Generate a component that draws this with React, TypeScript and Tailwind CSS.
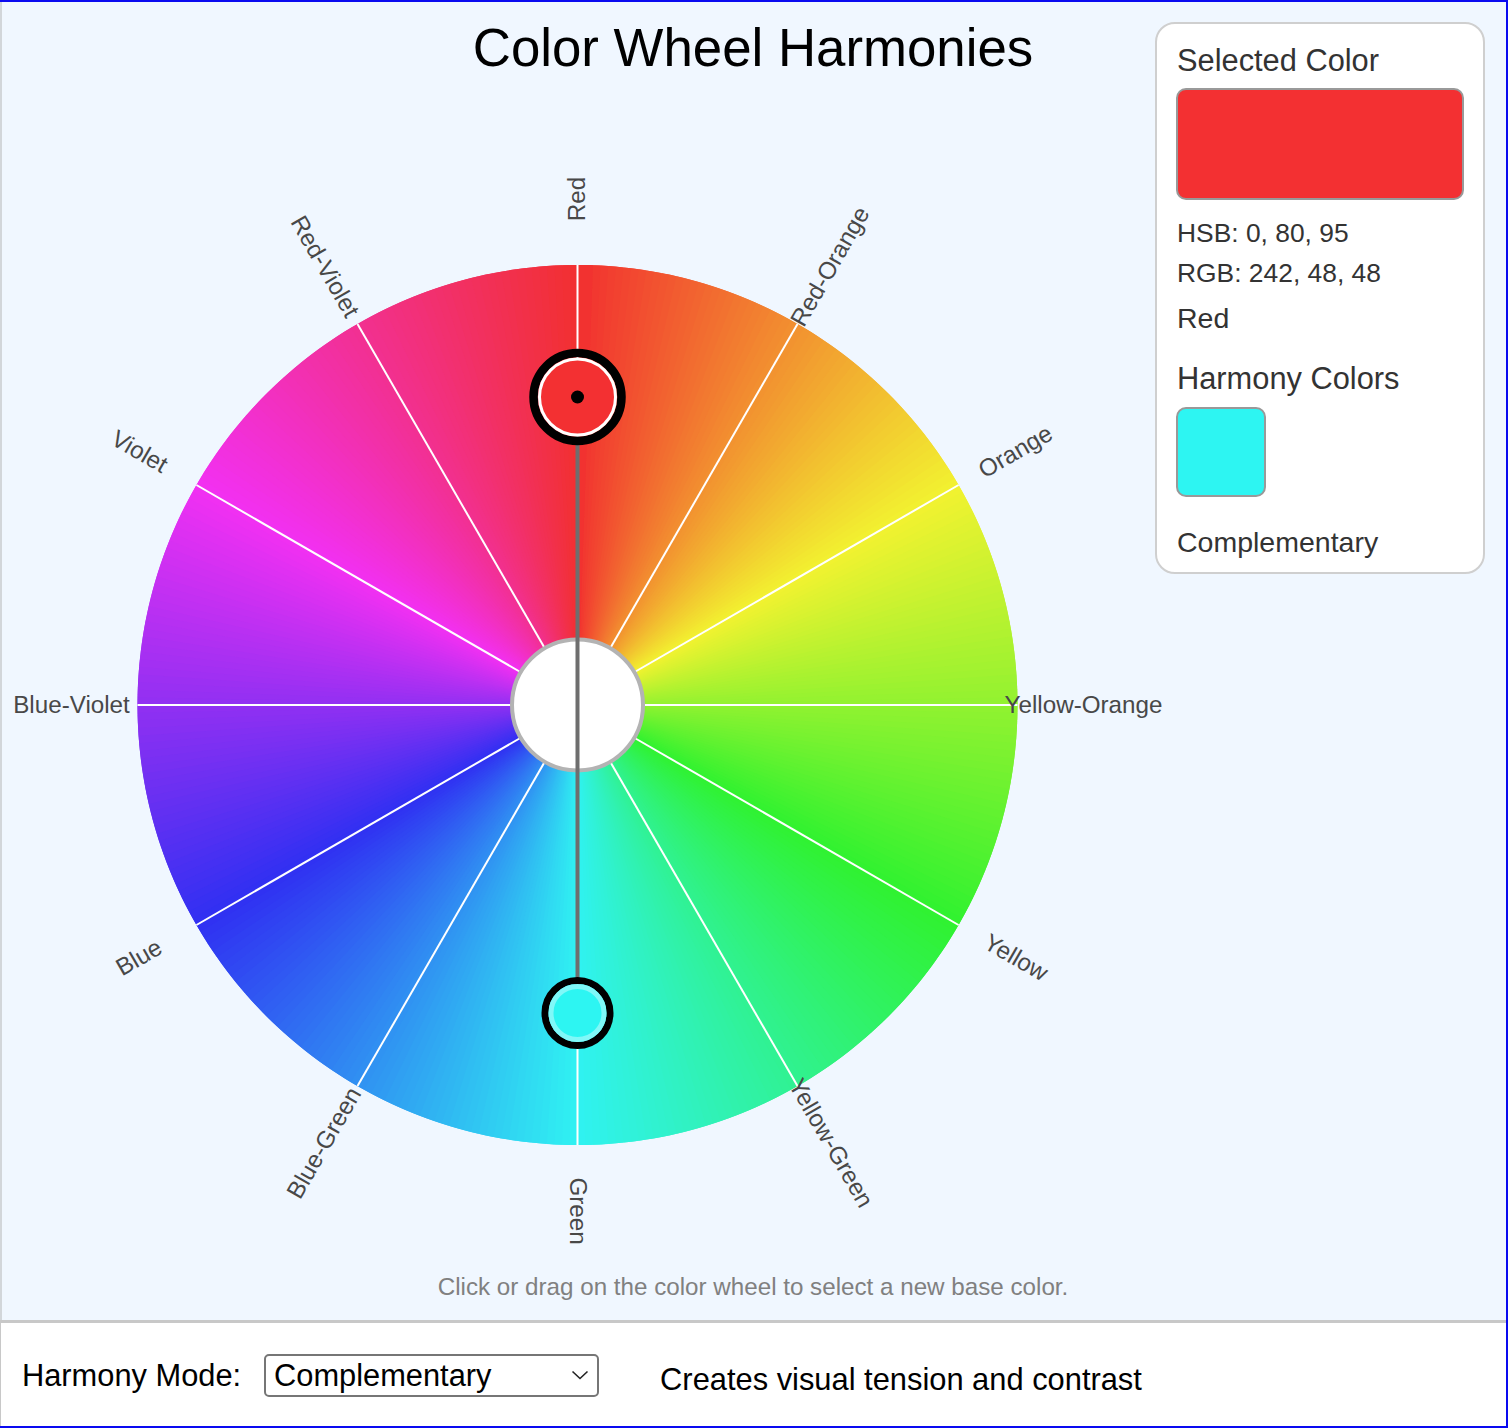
import React from "react";

const CX = 577.5;
const CY = 705;
const R = 440;
const labels = ["Red","Red-Orange","Orange","Yellow-Orange","Yellow","Yellow-Green","Green","Blue-Green","Blue","Blue-Violet","Violet","Red-Violet"];

function hsv(h: number) {
  const hi = 242, lo = 48;
  const k = (n: number) => {
    const x = (n + h / 60) % 6;
    return Math.round(hi - (hi - lo) * Math.max(0, Math.min(x, 4 - x, 1)));
  };
  return `rgb(${k(5)},${k(3)},${k(1)})`;
}
const pt = (deg: number, r: number): [number, number] => {
  const a = ((deg - 90) * Math.PI) / 180;
  return [CX + r * Math.cos(a), CY + r * Math.sin(a)];
};

function Wheel() {
  const wedges = [];
  for (let d = 0; d <= 360; d++) {
    const [x1, y1] = pt(d, R);
    const [x2, y2] = pt(d + 2, R);
    const c = hsv((d + 0.5) % 360);
    wedges.push(<path key={d} d={`M${CX} ${CY}L${x1} ${y1}A${R} ${R} 0 0 1 ${x2} ${y2}Z`} fill={c} />);
  }
  return (
    <svg viewBox="2 130 1504 1120" className="col-start-1 col-span-2 row-start-2 block w-[1504px] h-[1120px]">
      {wedges}
      {labels.map((_, i) => {
        const [x1, y1] = pt(i * 30, 66);
        const [x2, y2] = pt(i * 30, R);
        return <line key={i} x1={x1} y1={y1} x2={x2} y2={y2} stroke="#fff" strokeWidth={2} />;
      })}
      {labels.map((t, i) => {
        const deg = i * 30;
        const [x, y] = pt(deg, 506);
        let rot = deg - 90;
        if (deg > 180) rot -= 180;
        return (
          <text key={t} x={x} y={y} dy={-1} transform={`rotate(${rot} ${x} ${y})`} textAnchor="middle" dominantBaseline="central" fill="#484848" fontSize={24.2}>
            {t}
          </text>
        );
      })}
      <circle cx={CX} cy={CY} r={65.5} fill="#fff" stroke="#b3b3b3" strokeWidth={4} />
      <line x1={CX} y1={397} x2={CX} y2={1013} stroke="#6e6e6e" strokeWidth={4} />
      <circle cx={CX} cy={397} r={44} fill="none" stroke="#000" strokeWidth={8.5} />
      <circle cx={CX} cy={397} r={38} fill="#f33032" stroke="#fff" strokeWidth={3} />
      <circle cx={CX} cy={397} r={6.5} fill="#000" />
      <circle cx={CX} cy={1013} r={32.5} fill="none" stroke="#000" strokeWidth={7} />
      <circle cx={CX} cy={1013} r={26.5} fill="#2df5f2" stroke="#80f8f8" strokeWidth={5} />
    </svg>
  );
}

export default function App() {
  return (
    <div className="w-[1508px] h-[1428px] flex flex-col border-t-2 border-r-2 border-b-2 border-[#0a0af0] font-['Liberation_Sans',Arial,sans-serif] overflow-hidden">
      <main className="flex-1 grid grid-cols-[1fr_351px] grid-rows-[128px_1120px_1fr] bg-[#f0f7ff] border-l-2 border-[#d2d6da]">
        <h1 className="col-start-1 col-span-2 row-start-1 pt-[14px] -ml-[2px] text-center text-[52.8px] leading-[64px] font-normal text-black">
          Color Wheel Harmonies
        </h1>
        <Wheel />
        <aside className="col-start-2 row-start-1 row-span-2 self-start mt-[20px] w-[330px] h-[552px] rounded-[20px] border-2 border-[#cfcfcf] bg-white px-5 pt-[19px] text-[#333333]">
          <div className="text-[30.8px] leading-[36px]">Selected Color</div>
          <div className="mt-[9px] h-[112px] w-[288px] -ml-[1px] rounded-[10px] border-2 border-[#999999] bg-[#f33032]" />
          <div className="mt-[18px] text-[26.4px] leading-[30px]">HSB: 0, 80, 95</div>
          <div className="mt-[10px] text-[26.4px] leading-[30px]">RGB: 242, 48, 48</div>
          <div className="mt-[13px] text-[28.5px] leading-[34px]">Red</div>
          <div className="mt-[26px] text-[30.8px] leading-[36px]">Harmony Colors</div>
          <div className="mt-[10px] h-[90px] w-[90px] -ml-[1px] rounded-[10px] border-2 border-[#999999] bg-[#2df5f2]" />
          <div className="mt-[28px] text-[28.5px] leading-[34px]">Complementary</div>
        </aside>
        <p className="col-start-1 col-span-2 row-start-3 -ml-[2px] pt-[22px] text-center text-[24.2px] leading-[30px] text-[#808080]">
          Click or drag on the color wheel to select a new base color.
        </p>
      </main>
      <footer className="h-[106px] flex items-center bg-white border-t-[3px] border-l border-[#c8c8c8] pl-[21px] text-black">
        <label className="text-[30.8px] leading-[36px] mt-[3px]">Harmony Mode:</label>
        <div className="relative ml-[23px] w-[335px] h-[43px] mt-[2px]">
          <select defaultValue="Complementary" className="w-full h-full appearance-none rounded-[5px] border-2 border-[#767676] bg-white pl-[8px] text-[30.8px] leading-[36px] text-black outline-none">
            <option>Complementary</option>
          </select>
          <svg viewBox="0 0 18 10" className="absolute right-[10px] top-[16px] w-[18px] h-[10px] pointer-events-none" fill="none" stroke="#222" strokeWidth={1.6}>
            <path d="M1.5 1.5L9 8.5L16.5 1.5" />
          </svg>
        </div>
        <span className="ml-[61px] mt-[10px] text-[30.85px] leading-[36px]">Creates visual tension and contrast</span>
      </footer>
    </div>
  );
}
